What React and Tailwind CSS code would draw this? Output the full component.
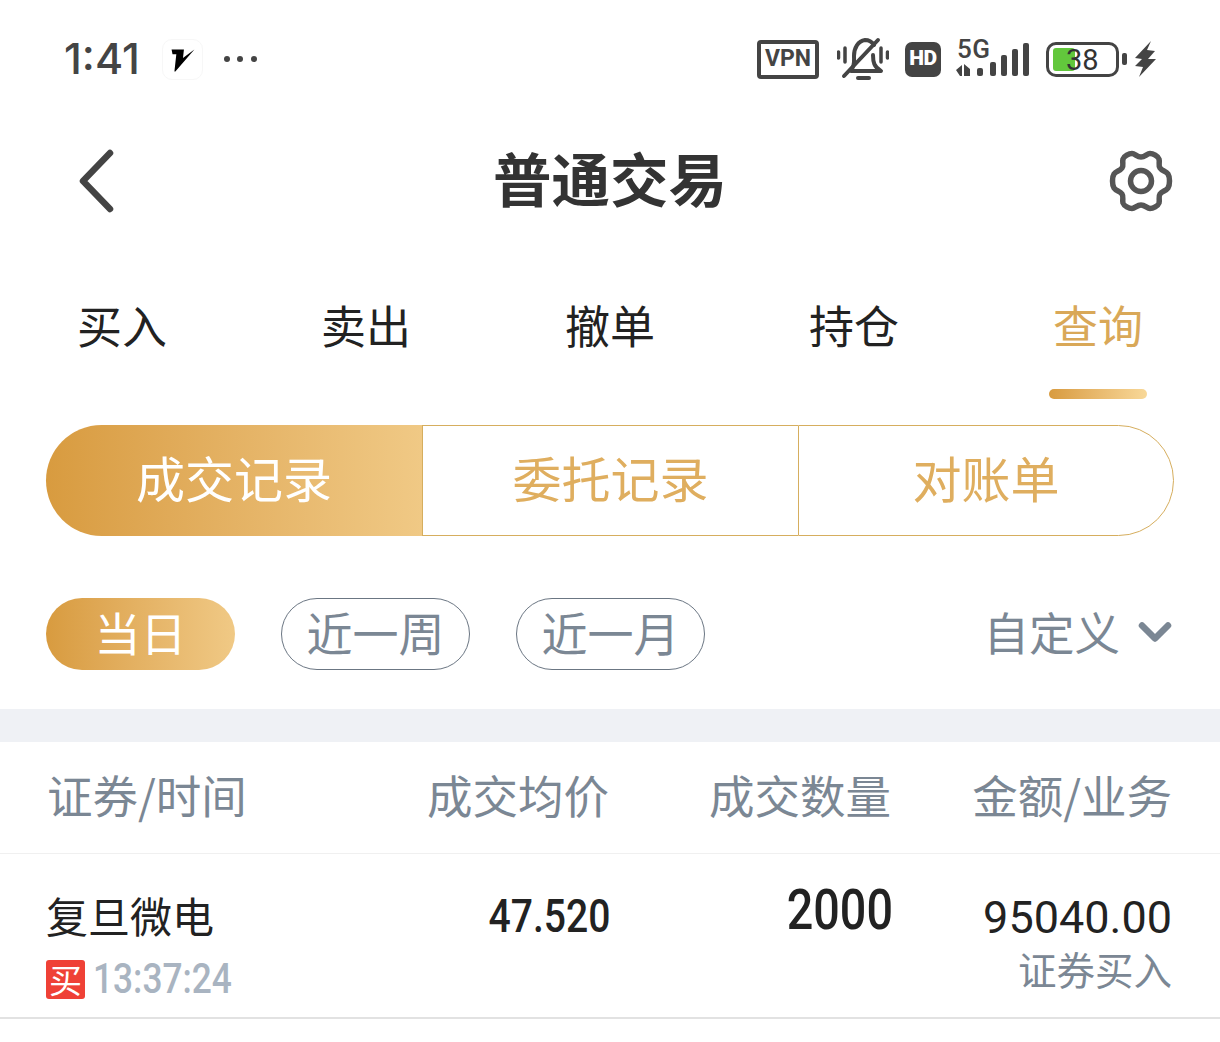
import React from 'react';
import { ChevronDown } from 'lucide-react';

const cjk = "font-['Noto_Sans_CJK_SC',sans-serif]";
const roboto = "font-['Roboto',sans-serif]";

const tabs = ['买入', '卖出', '撤单', '持仓', '查询'];

function VpnIcon() {
  return (
    <div className={`flex h-[39px] w-[62px] items-center justify-center rounded-[4px] border-[4px] border-[#444] ${roboto} text-[23px] font-bold text-[#444]`}>
      VPN
    </div>
  );
}

function MuteIcon() {
  return (
    <svg width="52" height="44" viewBox="0 0 52 44" fill="none" stroke="#444" strokeLinecap="round" strokeLinejoin="round">
      <path d="M14 33 C18 29 17 24 17 19 C17 11 21 4 28 3 C32 3 35 5 37 8" strokeWidth="4" />
      <path d="M36 18 C36 25 37 30 44 34 L14 34" strokeWidth="4" />
      <path d="M7 39 L41 3" strokeWidth="4" />
      <path d="M21 41 H32" strokeWidth="4" />
      <path d="M1.5 15 V21 M8 11 V25 M44 11 V25 M50.5 15 V21" strokeWidth="3.5" />
    </svg>
  );
}

function SignalIcon() {
  return (
    <div className="relative h-[44px] w-[74px]">
      <span className={`absolute left-[2px] top-[-3px] ${roboto} text-[26px] font-medium leading-[30px] tracking-[0.5px] text-[#444]`}>5G</span>
      <svg className="absolute left-0 top-0" width="74" height="44" viewBox="0 0 74 44" fill="#444">
        <path d="M1 33 L7 28 V39 H5 Z M9 27 L15 32 V39 H9 Z" />
        <rect x="22" y="31" width="6" height="8" rx="2" />
        <rect x="35" y="25" width="6" height="14" rx="2" />
        <rect x="46" y="18" width="6" height="21" rx="2" />
        <rect x="57" y="12" width="6" height="27" rx="2" />
        <rect x="68" y="6" width="6" height="33" rx="2" />
      </svg>
    </div>
  );
}

function BatteryIcon() {
  return (
    <div className="flex items-center gap-[3px]">
      <div className="relative h-[35px] w-[73px] rounded-[10px] border-[3px] border-[#444]">
        <div className="absolute bottom-[3px] left-[4px] top-[3px] w-[22px] rounded-[3px] bg-[#62c73c]" />
        <span className={`absolute left-[17px] top-[-1px] ${roboto} text-[29px] leading-[32px] text-[#333]`}>38</span>
      </div>
      <div className="h-[12px] w-[5px] rounded-[2px] bg-[#444]" />
    </div>
  );
}

function StatusBar() {
  return (
    <div className="flex h-[118px] items-center justify-between pl-[64px] pr-[63px]">
      <div className="flex items-center">
        <span className="-mt-[2px] font-['Inter',sans-serif] text-[43px] font-medium leading-none text-[#444]">1:41</span>
        <div className="ml-[22px] flex h-[41px] w-[41px] items-center justify-center rounded-[10px] border border-[#f7f7f7]">
          <svg width="41" height="41" viewBox="0 0 41 41" fill="#000">
            <path d="M9 10 H22 L21 19 L33 10 L13 33 H12 L14 15 H10 Z" />
          </svg>
        </div>
        <div className="ml-[21px] flex gap-[7.5px]">
          <span className="h-[6px] w-[6px] rounded-full bg-[#444]" />
          <span className="h-[6px] w-[6px] rounded-full bg-[#444]" />
          <span className="h-[6px] w-[6px] rounded-full bg-[#444]" />
        </div>
      </div>
      <div className="flex items-center">
        <VpnIcon />
        <div className="ml-[18px]"><MuteIcon /></div>
        <div className={`ml-[16px] flex h-[35px] w-[36px] items-center justify-center rounded-[7px] bg-[#444] ${roboto} text-[21px] font-black tracking-[-0.5px] text-white`}>HD</div>
        <div className="ml-[14px]"><SignalIcon /></div>
        <div className="ml-[17px]"><BatteryIcon /></div>
        <svg className="ml-[8px]" width="22" height="36" viewBox="0 0 22 36" fill="#444">
          <path d="M16 0 L0 17 L7 18 L0 25 L8 26 L4 36 L21 18 L13 18 L20 10 L12 9 Z" />
        </svg>
      </div>
    </div>
  );
}

function GearIcon() {
  return (
    <svg width="66" height="62" viewBox="0 0 66 62" fill="none" stroke="#555" strokeWidth="5.5" strokeLinejoin="round">
      <path d="M24 3.5 C27 3.5 29 7 33 7 C37 7 39 3.5 42 3.5 C45 3.5 50 6 51 9 C52 13 50 15 52 18 C54 21 58 21 60 24 C62 27 62 35 60 38 C58 41 54 41 52 44 C50 47 52 49 51 53 C50 56 45 58.5 42 58.5 C39 58.5 37 55 33 55 C29 55 27 58.5 24 58.5 C21 58.5 16 56 15 53 C14 49 16 47 14 44 C12 41 8 41 6 38 C4 35 4 27 6 24 C8 21 12 21 14 18 C16 15 14 13 15 9 C16 6 21 3.5 24 3.5 Z" />
      <circle cx="33" cy="31" r="10.5" />
    </svg>
  );
}

function Chip({ children, active }) {
  if (active) {
    return (
      <div className="flex h-[72px] w-[189px] items-center justify-center rounded-full bg-gradient-to-r from-[#d89b3f] to-[#f0c985] pb-[6px] text-[46px] text-white">
        {children}
      </div>
    );
  }
  return (
    <div className="flex h-[72px] w-[189px] items-center justify-center rounded-full border border-[#6b7683] pb-[6px] text-[46px] text-[#7b8794]">
      {children}
    </div>
  );
}

export default function App() {
  return (
    <div className={`h-[1042px] w-[1220px] overflow-hidden bg-white ${cjk}`}>
      <StatusBar />

      {/* header */}
      <div className="grid h-[127px] grid-cols-[1fr_auto_1fr] items-center pb-[2px] pl-[78px] pr-[46px]">
        <svg width="36" height="64" viewBox="0 0 36 64" fill="none" stroke="#444" strokeWidth="6.5" strokeLinecap="round" strokeLinejoin="round">
          <path d="M32 4 L5 32 L32 60" />
        </svg>
        <div className="-mt-[6px] -ml-[32px] text-[58.5px] font-bold leading-none text-[#333]">普通交易</div>
        <div className="justify-self-end"><GearIcon /></div>
      </div>

      {/* tabs */}
      <div className="grid h-[180px] grid-cols-5">
        {tabs.map((t, i) => (
          <div key={t} className="flex flex-col items-center pt-[48px]">
            <span className={`text-[45px] leading-[64px] ${i === 4 ? 'text-[#d9a858]' : 'text-[#222]'}`}>{t}</span>
            {i === 4 && <div className="mt-[32px] h-[10px] w-[98px] rounded-full bg-gradient-to-r from-[#d89b3f] to-[#f8d898]" />}
          </div>
        ))}
      </div>

      {/* segments */}
      <div className="mx-[46px] flex h-[111px] text-[49px]">
        <div className="flex w-[376px] items-center justify-center rounded-l-full bg-gradient-to-r from-[#d89b3f] to-[#f0c985] pb-[8px] text-white">成交记录</div>
        <div className="flex w-[376px] items-center justify-center border-y border-l border-[#d6ae5e] pb-[8px] text-[#dfae5f]">委托记录</div>
        <div className="flex flex-1 items-center justify-center rounded-r-full border border-[#d6ae5e] pb-[8px] text-[#dfae5f]">对账单</div>
      </div>

      {/* date filter */}
      <div className="flex h-[173px] items-start justify-between pl-[46px] pr-[46px] pt-[62px]">
        <div className="flex gap-[46px]">
          <Chip active>当日</Chip>
          <Chip>近一周</Chip>
          <Chip>近一月</Chip>
        </div>
        <div className="flex h-[72px] items-center pb-[4px] text-[45.5px] text-[#7b8794]">
          <span className="-mt-[2px]">自定义</span>
          <ChevronDown className="-mr-[7px] ml-[9px]" size={52} strokeWidth={3} color="#7b8794" />
        </div>
      </div>

      <div className="h-[33px] bg-[#eff1f5]" />

      {/* table head */}
      <div className="grid h-[112px] grid-cols-[1fr_auto_282px_281px] items-center border-b border-[#f0f0f0] pb-[6px] pl-[47px] pr-[48px] text-[45.5px] text-[#7b8794]">
        <span>证券/时间</span>
        <span className="text-right">成交均价</span>
        <span className="text-right">成交数量</span>
        <span className="text-right">金额/业务</span>
      </div>

      {/* row */}
      <div className="grid h-[165px] grid-cols-[1fr_auto_282px_281px] border-b-2 border-[#e2e2e2] pl-[46px] pr-[48px]">
        <div className="pt-[31px]">
          <div className="text-[42px] leading-[60px] text-[#222]">复旦微电</div>
          <div className="mt-[3px] flex items-center pt-[6px]">
            <span className="flex h-[39px] w-[39px] items-center justify-center rounded-[3px] bg-[#ef4136] text-[33px] leading-none text-white">买</span>
            <span className={`ml-[8px] origin-left scale-x-[0.84] ${roboto} text-[42px] font-medium leading-[50px] text-[#a9b4c1]`}>13:37:24</span>
          </div>
        </div>
        <div className={`origin-right translate-x-[2px] scale-x-[0.85] pt-[32px] text-right ${roboto} text-[46px] font-medium leading-[60px] text-[#222]`}>47.520</div>
        <div className={`origin-right translate-x-[2px] scale-x-[0.85] pt-[26px] text-right ${roboto} text-[55px] font-medium leading-[60px] text-[#222]`}>2000</div>
        <div className="pt-[34px] text-right">
          <div className={`${roboto} text-[45px] leading-[60px] text-[#222]`}>95040.00</div>
          <div className="-mt-[5px] text-[38.5px] leading-[50px] text-[#7b8794]">证券买入</div>
        </div>
      </div>
    </div>
  );
}
